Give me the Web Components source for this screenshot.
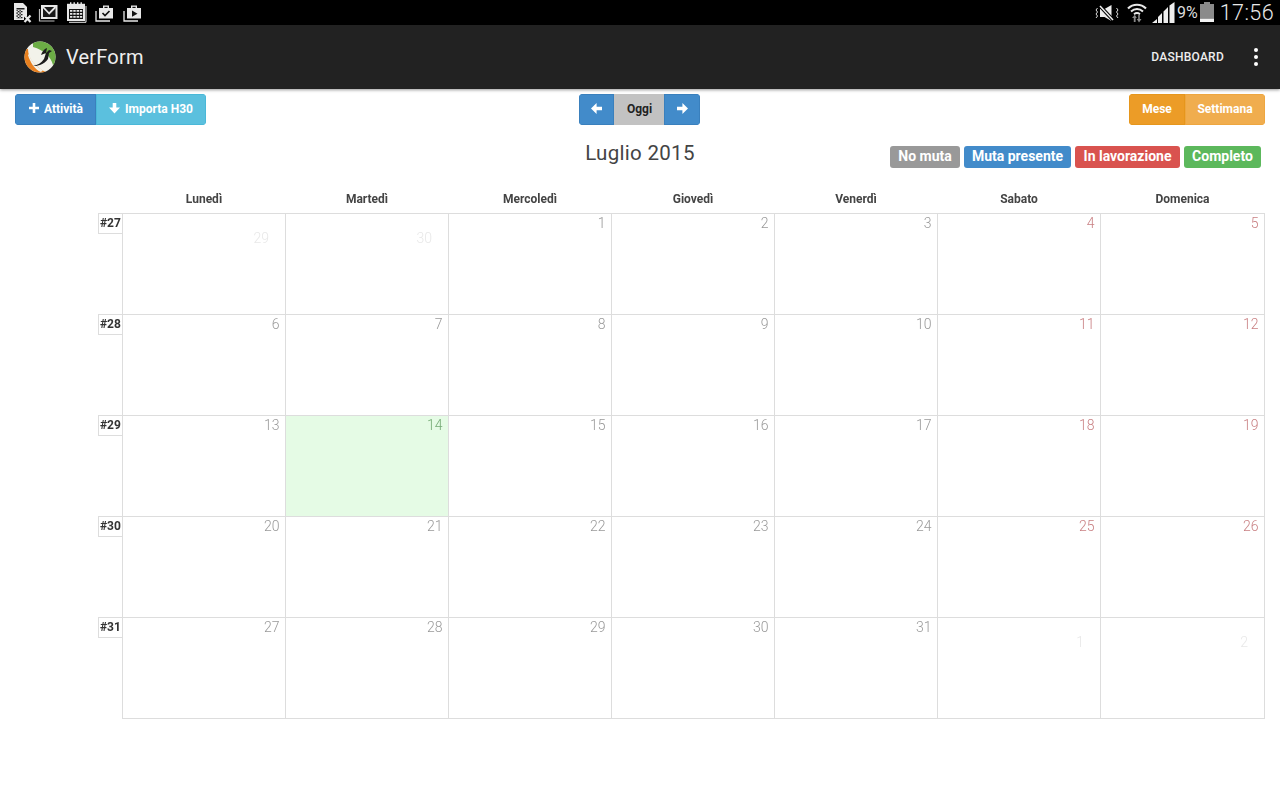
<!DOCTYPE html>
<html lang="it">
<head>
<meta charset="utf-8">
<title>VerForm</title>
<style>
    html, body { margin: 0; padding: 0; background: #fff; }
    body { font-family: Roboto, "Liberation Sans", sans-serif; width: 1280px; height: 800px; overflow: hidden; }
</style>
</head>
<body>
<status-bar></status-bar>
<app-bar></app-bar>
<cal-toolbar></cal-toolbar>
<cal-title></cal-title>
<month-grid></month-grid>

<script>
class StatusBar extends HTMLElement {
    constructor() {
        super();
        this.attachShadow({ mode: 'open' });
    }

    connectedCallback() {
        this.shadowRoot.innerHTML = `
            <style>
                :host { display: flex; align-items: center; height: 25px; background: #000; color: #e8e8e8; }
                svg { display: block; flex: none; }
                .left { display: flex; align-items: center; margin-left: 13px; }
                .right { display: flex; align-items: center; margin-left: auto; }
                .pct { font-size: 16px; font-weight: 400; margin-left: 2px; color: #ddd; }
                .time { font-size: 21.5px; font-weight: 300; margin: 0 6px 0 5px; letter-spacing: 0.4px; }
            </style>
            <div class="left">
                <svg width="20" height="21" viewBox="0 0 20 21" style="margin-right:5px">
                    <path d="M1 1h9l4 4v9h-3v4H1z" fill="#e8e8e8"/>
                    <path d="M3.5 6h8v1.4h-8zM3.5 9h6v1.2h-6zM3.5 12h6v1.2h-6zM3.5 15h6v1.2h-6zM3.5 7v9h1.2V7zM6.5 7v9h1.2V7z" fill="#222"/>
                    <path d="M11.5 13.5l6 6.5M17.5 13.5l-6 6.5" stroke="#e8e8e8" stroke-width="2.2" fill="none"/>
                </svg>
                <svg width="20" height="18" viewBox="0 0 20 18" style="margin-right:8px">
                    <path d="M1.500 5v12h15" stroke="#bbb" stroke-width="1.200" fill="none"/>
                    <rect x="4" y="2" width="14.500" height="12" fill="#1a1a1a" stroke="#e8e8e8" stroke-width="2"/>
                    <path d="M5 3l6.200 6.500L17.500 3" stroke="#e8e8e8" stroke-width="1.800" fill="none"/>
                </svg>
                <svg width="21" height="21" viewBox="0 0 21 21" style="margin-right:8px">
                    <path d="M1 1.8h18V19H1z" fill="#e8e8e8"/>
                    <path d="M4 .2h1.4v3H4zM7.5 .2h1.4v3H7.5zM11 .2h1.4v3H11zM14.500 .2h1.400v3h-1.400z" fill="#e8e8e8"/>
                    <path d="M3 7h14v10H3z" fill="#111"/>
                    <path d="M4 8h2.400v1.800H4zM7.300 8h2.400v1.800H7.300zM10.600 8h2.400v1.800h-2.400zM13.800 8h2.400v1.800h-2.400zM4 11h2.400v1.800H4zM7.300 11h2.400v1.800H7.300zM10.600 11h2.400v1.800h-2.400zM13.800 11h2.400v1.800h-2.400zM4 14h2.400v1.800H4zM7.300 14h2.400v1.800H7.300zM10.600 14h2.400v1.800h-2.400zM13.800 14h2.400v1.800h-2.400z" fill="#e8e8e8"/>
                    <path d="M3 20.300h17V4" stroke="#e8e8e8" stroke-width="1" fill="none"/>
                </svg>
                <svg width="19" height="18" viewBox="0 0 19 18" style="margin-right:9px">
                    <path d="M1 7v10h14" stroke="#e8e8e8" stroke-width="1.300" fill="none"/>
                    <path d="M4 4h4V1.500h6V4h4v10.500H4z" fill="#e8e8e8"/>
                    <path d="M9.400 2.800h3.200V4H9.400z" fill="#111"/>
                    <path d="M7.500 9l2.500 2.500L14.500 7" stroke="#111" stroke-width="1.700" fill="none"/>
                </svg>
                <svg width="19" height="18" viewBox="0 0 19 18">
                    <path d="M1 7v10h14" stroke="#e8e8e8" stroke-width="1.300" fill="none"/>
                    <path d="M4 4h4V1.500h6V4h4v10.500H4z" fill="#e8e8e8"/>
                    <path d="M9.400 2.800h3.200V4H9.400z" fill="#111"/>
                    <path d="M9 6.500l5.500 3.200L9 12.800z" fill="#111"/>
                </svg>
            </div>
            <div class="right">
                <svg width="24" height="18" viewBox="0 0 24 18" style="margin-right:8px">
                    <path d="M5 5h4.500L16.500 1v16l-7-4H5z" fill="#eee"/>
                    <path d="M5 2l13 14" stroke="#000" stroke-width="3.400"/>
                    <path d="M5 2l13 14" stroke="#eee" stroke-width="1.500"/>
                    <path d="M2.500 4L1 6l1.500 2-1.500 2 1.500 2-1.500 2M21.500 4L23 6l-1.500 2 1.500 2-1.500 2 1.500 2" stroke="#ddd" stroke-width="1" fill="none"/>
                </svg>
                <svg width="20" height="21" viewBox="0 0 20 21" style="margin-right:5px">
                    <path d="M1 6.500C6 1.500 14 1.500 19 6.500" stroke="#e8e8e8" stroke-width="2.200" fill="none"/>
                    <path d="M4 9.500c3.500-3.200 8.500-3.200 12 0" stroke="#e8e8e8" stroke-width="2" fill="none"/>
                    <path d="M7 12.300c1.800-1.500 4.200-1.500 6 0" stroke="#e8e8e8" stroke-width="1.800" fill="none"/>
                    <path d="M6.800 20v-4H5l2.800-3.200 2 3.200H8.600v4zM11.200 13v4H9.800l2.200 3.500 2.500-3.500h-1.700v-4z" fill="#888"/>
                </svg>
                <svg width="23" height="21" viewBox="0 0 23 21">
                    <path d="M0 21l5-4v4zM6 21v-6l4-4v10zM11.500 21V9.500l4.500-4.500v16zM17.500 21V3.500L22.500 0v21z" fill="#eee"/>
                </svg>
                <span class="pct">9%</span>
                <svg width="16" height="21" viewBox="0 0 16 21" style="margin-left:1px">
                    <path d="M5 0h6v2H5zM1 2h14v14.500H1z" fill="#8a8a8a"/>
                    <path d="M1 16.500h14V20H1z" fill="#f2f2f2"/>
                </svg>
                <span class="time">17:56</span>
            </div>
        `;
    }
}

class AppBar extends HTMLElement {
    constructor() {
        super();
        this.attachShadow({ mode: 'open' });
    }

    connectedCallback() {
        this.shadowRoot.innerHTML = `
            <style>
                :host {
                    display: flex;
                    align-items: center;
                    height: 64px;
                    padding: 0 20px 0 24px;
                    background: #222;
                    box-shadow: 0 1px 3px rgba(0,0,0,.4);
                    position: relative;
                }
                .name { font-size: 20px; font-weight: 400; color: #eee; margin-left: 10px; letter-spacing: 0.200px; }
                .dash { margin-left: auto; font-size: 12px; font-weight: 500; color: #eee; letter-spacing: 0.250px; }
                .more { display: flex; flex-direction: column; gap: 3px; margin-left: 30px; margin-right: 2px; }
                .more i { display: block; width: 4px; height: 4px; border-radius: 50%; background: #fff; }
                svg { display: block; flex: none; }
            </style>
            <svg width="32" height="32" viewBox="0 0 32 32">
                <defs><clipPath id="c"><circle cx="16" cy="16" r="15.500"/></clipPath></defs>
                <g clip-path="url(#c)">
                    <rect width="32" height="32" fill="#f2f2ea"/>
                    <path d="M9 0h23v24h-3C27 16 20 9 9 6z" fill="#6cad45"/>
                    <path d="M0 8h4c0 10 8 19 20 24H0z" fill="#e8801f"/>
                    <path d="M5 13c2 7 7 13 14 16l-2 2C11 29 6 21 4 14z" fill="#f2f2ea"/>
                </g>
                <path d="M9 25c5-1 8-3 11-7l2-6 3-3 3 1-3 2-1 6c-2 3-5 5-8 6-3 1-5 1-7 1z" fill="#1c1c1c"/>
                <path d="M17 14c1-3 3-6 6-7l-1 5z" fill="#1c1c1c"/>
            </svg>
            <span class="name">VerForm</span>
            <span class="dash">DASHBOARD</span>
            <span class="more"><i></i><i></i><i></i></span>
        `;
    }
}

class BtnGroup extends HTMLElement {
    constructor() {
        super();
        this.attachShadow({ mode: 'open' });
    }

    connectedCallback() {
        this.shadowRoot.innerHTML = `
            <style>
                :host { display: inline-flex; height: 31px; border-radius: 4px; overflow: hidden; }
                ::slotted(cal-btn) { flex: none; }
            </style>
            <slot></slot>
        `;
    }
}

class CalBtn extends HTMLElement {
    constructor() {
        super();
        this.attachShadow({ mode: 'open' });
    }

    connectedCallback() {
        const w = this.getAttribute('w');
        const bg = this.getAttribute('bg');
        const edge = this.getAttribute('edge');
        const color = this.getAttribute('color') || '#fff';
        const icon = this.getAttribute('icon');
        const icons = {
            plus: '<path transform="translate(1 0)" d="M3.700 0h2.600v3.700H10v2.600H6.300V10H3.700V6.300H0V3.700h3.700z"/>',
            down: '<path d="M3.700 0h3.600v4.600H11L5.500 10.500 0 4.600h3.700z"/>',
            left: '<path d="M11 3.800v3.400H5.600V11L0 5.500 5.600 0v3.800z"/>',
            right: '<path d="M0 3.800v3.400h5.400V11L11 5.500 5.400 0v3.800z"/>'
        };
        const glyph = icon ? `<svg width="11" height="11" viewBox="0 0 11 11" fill="${color}">${icons[icon]}</svg>` : '';
        this.shadowRoot.innerHTML = `
            <style>
                :host {
                    display: flex;
                    align-items: center;
                    justify-content: center;
                    gap: 5px;
                    box-sizing: border-box;
                    width: ${w}px;
                    height: 31px;
                    padding-bottom: 2px;
                    background: ${bg};
                    border: 1px solid ${edge};
                    color: ${color};
                    font-size: 12px;
                    font-weight: 700;
                }
                :host([nudge]) { padding-left: 1px; }
                svg { display: block; }
            </style>
            ${glyph}<slot></slot>
        `;
    }
}

class CalToolbar extends HTMLElement {
    constructor() {
        super();
        this.attachShadow({ mode: 'open' });
    }

    connectedCallback() {
        this.shadowRoot.innerHTML = `
            <style>
                :host {
                    display: grid;
                    grid-template-columns: 1fr auto 1fr;
                    align-items: center;
                    padding: 5px 15px 0;
                }
                .start { justify-self: start; }
                .mid { margin-right: 1px; }
                .end { justify-self: end; }
            </style>
            <btn-group class="start">
                <cal-btn w="81" bg="#428bca" edge="#3a80bd" icon="plus">Attività</cal-btn>
                <cal-btn w="110" bg="#5bc0de" edge="#4ab8d8" icon="down">Importa H30</cal-btn>
            </btn-group>
            <btn-group class="mid">
                <cal-btn w="35" bg="#428bca" edge="#3a80bd" icon="left"></cal-btn>
                <cal-btn w="50" bg="#c2c2c2" edge="#c2c2c2" color="#222" nudge>Oggi</cal-btn>
                <cal-btn w="36" bg="#428bca" edge="#3a80bd" icon="right"></cal-btn>
            </btn-group>
            <btn-group class="end">
                <cal-btn w="56" bg="#ec9c27" edge="#e6961c">Mese</cal-btn>
                <cal-btn w="80" bg="#f0ad4e" edge="#eea63f">Settimana</cal-btn>
            </btn-group>
        `;
    }
}

class CalLabel extends HTMLElement {
    constructor() {
        super();
        this.attachShadow({ mode: 'open' });
    }

    connectedCallback() {
        this.shadowRoot.innerHTML = `
            <style>
                :host {
                    display: block;
                    box-sizing: border-box;
                    width: ${this.getAttribute('w')}px;
                    height: 22px;
                    line-height: 20px;
                    border-radius: 3px;
                    background: ${this.getAttribute('bg')};
                    color: #fff;
                    font-size: 14px;
                    font-weight: 700;
                    text-align: center;
                    white-space: nowrap;
                }
            </style>
            <slot></slot>
        `;
    }
}

class CalTitle extends HTMLElement {
    constructor() {
        super();
        this.attachShadow({ mode: 'open' });
    }

    connectedCallback() {
        this.shadowRoot.innerHTML = `
            <style>
                :host {
                    display: grid;
                    grid-template-columns: 1fr auto 1fr;
                    align-items: start;
                    height: 58px;
                    padding: 0 19px;
                }
                .t { font-size: 20.500px; font-weight: 400; color: #444; line-height: 24px; margin-top: 16px; letter-spacing: 0.300px; }
                .legend { grid-column: 3; display: flex; justify-content: flex-end; gap: 4px; margin-top: 21px; }
            </style>
            <span></span>
            <div class="t">Luglio 2015</div>
            <div class="legend">
                <cal-label bg="#999" w="70">No muta</cal-label>
                <cal-label bg="#428bca" w="107">Muta presente</cal-label>
                <cal-label bg="#d9534f" w="105">In lavorazione</cal-label>
                <cal-label bg="#5cb85c" w="77">Completo</cal-label>
            </div>
        `;
    }
}

class MonthGrid extends HTMLElement {
    constructor() {
        super();
        this.attachShadow({ mode: 'open' });
    }

    connectedCallback() {
        const days = ['Lunedì', 'Martedì', 'Mercoledì', 'Giovedì', 'Venerdì', 'Sabato', 'Domenica'];
        const weeks = [
            [27, [29, 30, 1, 2, 3, 4, 5]],
            [28, [6, 7, 8, 9, 10, 11, 12]],
            [29, [13, 14, 15, 16, 17, 18, 19]],
            [30, [20, 21, 22, 23, 24, 25, 26]],
            [31, [27, 28, 29, 30, 31, 1, 2]]
        ];
        const rows = weeks.map(([wk, nums], r) => {
            const cells = nums.map((n, i) => {
                const other = (r === 0 && n > 20) || (r === 4 && n < 10);
                let cls = 'cell';
                if (other) cls += ' other';
                else if (i > 4) cls += ' we';
                if (r === 2 && n === 14) cls += ' today';
                return `<div class="${cls}">${n}</div>`;
            }).join('');
            return `<div class="week"><div class="no">#${wk}</div><div class="cells">${cells}</div></div>`;
        }).join('');

        this.shadowRoot.innerHTML = `
            <style>
                :host { display: block; padding-left: 98px; width: 1167px; color: #333; will-change: opacity; }
                .head {
                    display: grid;
                    grid-template-columns: repeat(6, 163px) 164px;
                    box-sizing: border-box;
                    margin-left: 24.500px;
                    height: 35px;
                    margin-top: -5px;
                    padding-top: 6px;
                }
                .head div { font-size: 12px; font-weight: 700; color: #444; text-align: center; line-height: 30px; height: 29px; }
                .week { display: grid; grid-template-columns: 24px 1143px; height: 101px; }
                .no {
                    box-sizing: border-box;
                    height: 21px;
                    border: 1px solid #ddd;
                    border-right: 0;
                    font-size: 12px;
                    font-weight: 700;
                    line-height: 18px;
                    padding-left: 1px;
                }
                .cells {
                    display: grid;
                    grid-template-columns: repeat(6, 163px) 164px;
                    border-left: 1px solid #ddd;
                    border-top: 1px solid #ddd;
                    box-sizing: border-box;
                    width: 1143px;
                }
                .week:last-child { height: 102px; }
                .week:last-child .cells { border-bottom: 1px solid #ddd; }
                .cell {
                    box-sizing: border-box;
                    border-right: 1px solid #ddd;
                    padding: 0 5.500px 0 0;
                    text-align: right;
                    font-size: 14px;
                    font-weight: 300;
                    line-height: 18px;
                    color: #999;
                }
                .we { color: #c98083; }
                .today { background: #e5fbe5; color: #74aa74; }
                .other { color: #e8e8e8; padding: 15px 16px 0 0; }
            </style>
            <div class="head">${days.map(d => `<div>${d}</div>`).join('')}</div>
            ${rows}
        `;
    }
}

customElements.define('status-bar', StatusBar);
customElements.define('app-bar', AppBar);
customElements.define('btn-group', BtnGroup);
customElements.define('cal-btn', CalBtn);
customElements.define('cal-toolbar', CalToolbar);
customElements.define('cal-label', CalLabel);
customElements.define('cal-title', CalTitle);
customElements.define('month-grid', MonthGrid);
</script>
</body>
</html>
